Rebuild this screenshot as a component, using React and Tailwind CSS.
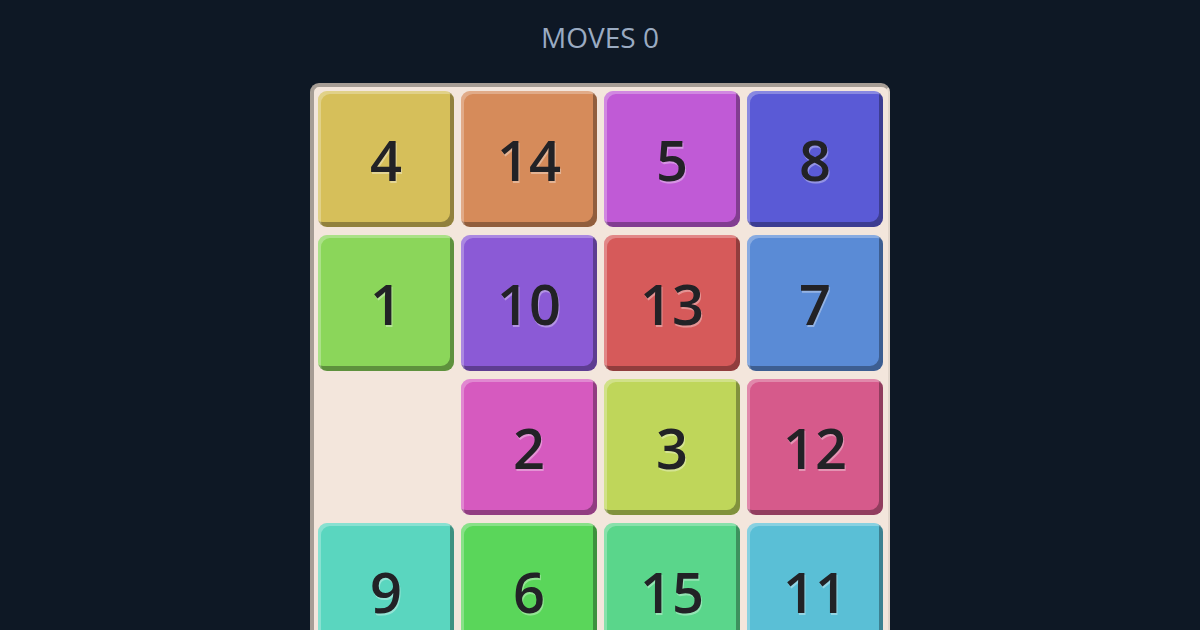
const TILES = [
  { n: 4, c: 'bg-[#d6bf5a]' },
  { n: 14, c: 'bg-[#d68b5a]' },
  { n: 5, c: 'bg-[#c05ad6]' },
  { n: 8, c: 'bg-[#5a5ad6]' },
  { n: 1, c: 'bg-[#8bd65a]' },
  { n: 10, c: 'bg-[#8b5ad6]' },
  { n: 13, c: 'bg-[#d65a5a]' },
  { n: 7, c: 'bg-[#5a8bd6]' },
  null,
  { n: 2, c: 'bg-[#d65abf]' },
  { n: 3, c: 'bg-[#bfd65a]' },
  { n: 12, c: 'bg-[#d65a8b]' },
  { n: 9, c: 'bg-[#5ad6bf]' },
  { n: 6, c: 'bg-[#5ad65a]' },
  { n: 15, c: 'bg-[#5ad68b]' },
  { n: 11, c: 'bg-[#5abfd6]' },
]

const Tile = ({ tile }) => {
  if (!tile) return <div className="w-[136px] h-[136px]" />
  return (
    <div
      className={`${tile.c} w-[136px] h-[136px] rounded-[9px] flex items-center justify-center text-[56px] font-semibold text-[#222226] [text-shadow:1px_2px_0_rgba(255,255,255,0.35)] shadow-[inset_3px_3px_0_rgba(255,255,255,0.28),inset_-4px_-5px_0_rgba(0,0,0,0.32)]`}
    >
      {tile.n}
    </div>
  )
}

const App = () => {
  return (
    <div className="h-screen overflow-hidden bg-[#0e1825] flex flex-col items-center font-['Open_Sans','Noto_Sans',sans-serif]">
      <div className="shrink-0 pt-[18px] h-[83px] text-[28px] leading-[38px] text-[#9aabc2]">
        MOVES 0
      </div>
      <div className="shrink-0 w-[580px] rounded-[9px] bg-[#f3e6dc] border-t-4 border-l-4 border-r-2 border-b-2 border-t-[#a69d95] border-l-[#a69d95] border-r-[#e2d6cc] border-b-[#e2d6cc] pt-[4px] pl-[4px] pr-[6px] pb-[6px]">
        <div className="grid grid-cols-4 gap-2">
          {TILES.map((t, i) => (
            <Tile key={i} tile={t} />
          ))}
        </div>
      </div>
    </div>
  )
}

export default App
